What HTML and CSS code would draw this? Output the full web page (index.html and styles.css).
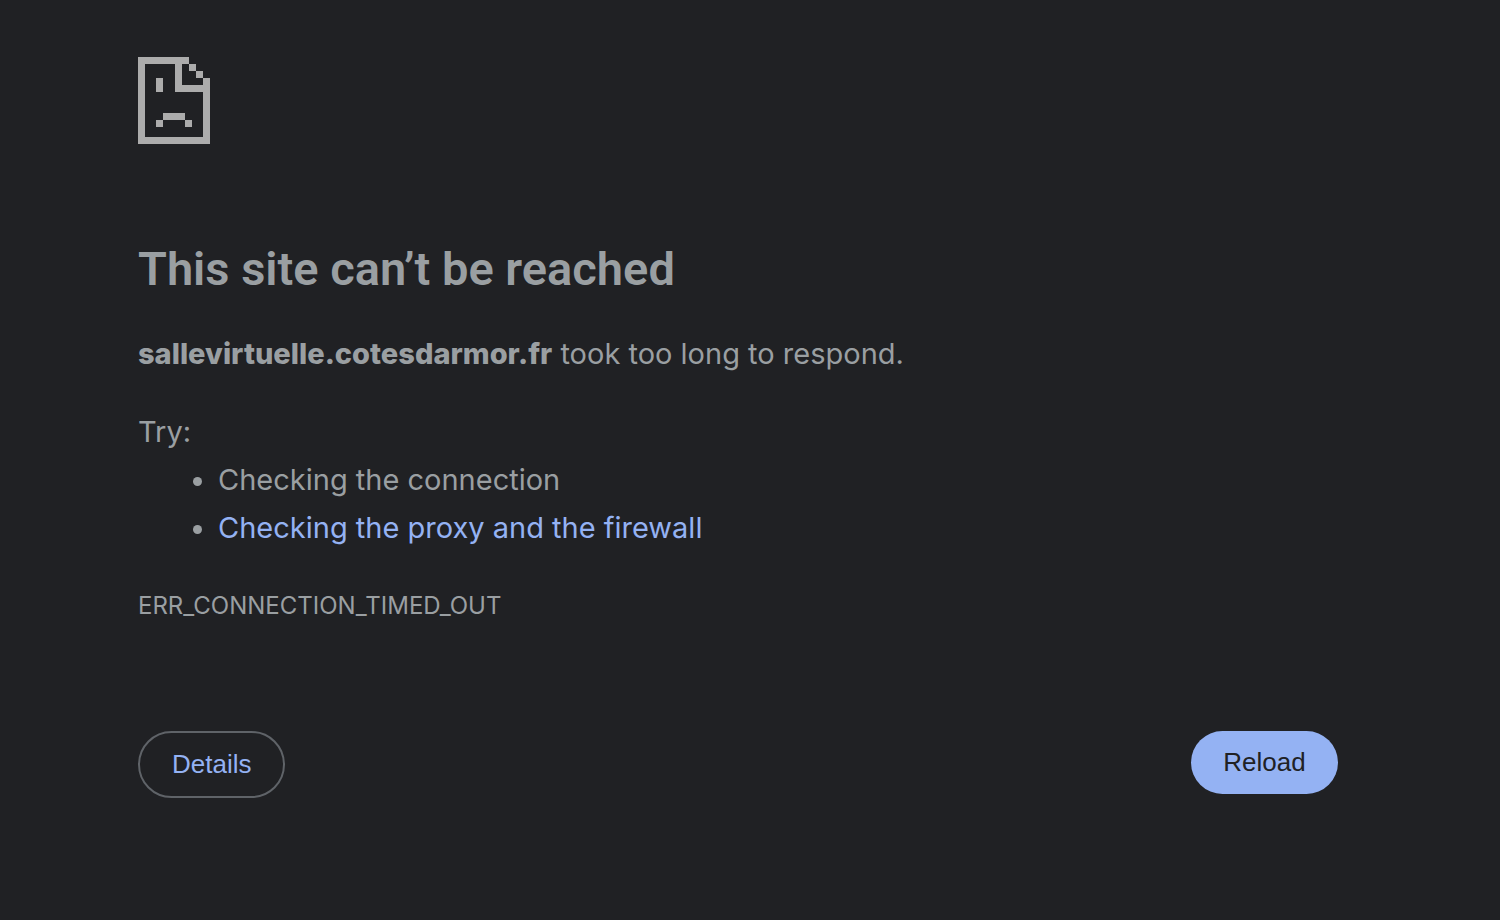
FILE: index.html
```html
<!DOCTYPE html>
<html lang="en">
<head>
    <meta charset="UTF-8">
    <meta name="viewport" content="width=device-width, initial-scale=1.0">
    <title>sallevirtuelle.cotesdarmor.fr</title>
    <link rel="stylesheet" href="styles.css">
</head>
<body>
    <main class="error-page">
        <svg class="error-icon" viewBox="0 0 72 87" shape-rendering="crispEdges" aria-hidden="true">
            <!-- page outline and folded corner -->
            <path d="M0 0H51V7H44V28H65V21H72V87H0ZM7 7V80H65V35H37V7Z" fill-rule="evenodd"/>
            <path d="M51 7H58V14H51ZM58 14H65V21H58Z"/>
            <!-- face -->
            <path d="M18 21H25V35H18ZM25 56H47V63H25ZM18 63H25V70H18ZM47 63H54V70H47Z"/>
        </svg>

        <h1>This site can’t be reached</h1>
        <p class="summary"><strong>sallevirtuelle.cotesdarmor.fr</strong> took too long to respond.</p>

        <div class="suggestions">
            <p>Try:</p>
            <ul>
                <li>Checking the connection</li>
                <li><a href="#buttons">Checking the proxy and the firewall</a></li>
            </ul>
        </div>

        <div class="error-code">ERR_CONNECTION_TIMED_OUT</div>

        <div class="buttons" id="buttons">
            <button type="button" class="details">Details</button>
            <button type="button" class="reload">Reload</button>
        </div>
    </main>
</body>
</html>
```
FILE: styles.css
```css
* {
    margin: 0;
    padding: 0;
    box-sizing: border-box;
}

body {
    font-family: Inter, sans-serif;
    font-size: 29px;
    line-height: 48px;
    padding: 57px 48px 0 24px;
    background-color: #202124;
    color: #9a9fa2;
}

.error-page {
    max-width: 1200px;
    margin: 0 auto;
}

.error-icon {
    display: block;
    width: 72px;
    height: 87px;
    fill: #acacac;
}

h1 {
    margin-top: 95px;
    font-family: Roboto, sans-serif;
    font-size: 47px;
    font-weight: 600;
    line-height: 60px;
}

.summary {
    margin-top: 31px;
}

.summary strong {
    font-weight: 800;
}

.suggestions {
    margin-top: 30px;
}

ul {
    padding-left: 80px;
}

a {
    color: #94b2f3;
    text-decoration: none;
}

.error-code {
    margin-top: 30px;
    font-size: 24px;
}

.buttons {
    display: flex;
    justify-content: space-between;
    align-items: flex-start;
    margin-top: 101px;
}

button {
    min-width: 147px;
    padding: 16px 32px;
    border: none;
    border-radius: 40px;
    font-family: "Liberation Sans", Arial, sans-serif;
    font-size: 26px;
    line-height: 31px;
    cursor: pointer;
}

.details {
    border: 2px solid #5f6368;
    background-color: transparent;
    color: #94b2f3;
}

.reload {
    background-color: #94b2f3;
    color: #202124;
}
```
